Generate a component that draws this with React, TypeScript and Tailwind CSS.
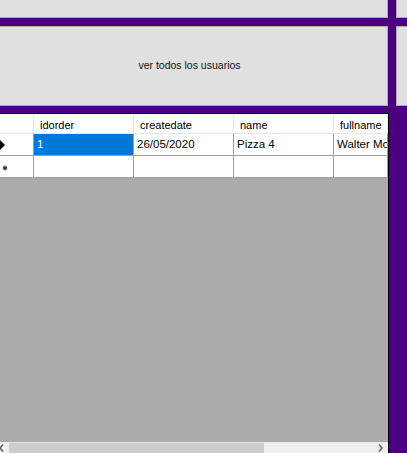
import React from 'react';

const font = { fontFamily: '"Liberation Sans", Arial, sans-serif' };

const cols = [
  { key: 'idorder', w: 'w-[100px]' },
  { key: 'createdate', w: 'w-[100px]' },
  { key: 'name', w: 'w-[100px]' },
  { key: 'fullname', w: 'w-[54px]' },
];

const row = ['1', '26/05/2020', 'Pizza 4', 'Walter Morales'];

const Arrow: React.FC = () => (
  <svg width="6" height="10" viewBox="0 0 6 10" className="block">
    <path d="M0 0 L5 5 L0 10 Z" fill="#000" />
  </svg>
);

const Star: React.FC = () => (
  <svg width="6" height="6" viewBox="0 0 6 6" className="block">
    <path d="M3 0.5 V5.5 M0.8 1.8 L5.2 4.2 M0.8 4.2 L5.2 1.8" stroke="#333" strokeWidth="1.2" />
  </svg>
);

const Chevron: React.FC<{ dir: 'left' | 'right' }> = ({ dir }) => (
  <svg width="5" height="8" viewBox="0 0 5 8" className="block">
    <path d={dir === 'left' ? 'M4 0.5 L1 4 L4 7.5' : 'M1 0.5 L4 4 L1 7.5'} fill="none" stroke="#606060" strokeWidth="1.6" />
  </svg>
);

const App: React.FC = () => {
  return (
    <div className="w-[407px] h-[453px] overflow-hidden bg-[#4b0082] flex flex-col text-[11px] text-black" style={font}>
      {/* top row of buttons */}
      <div className="flex h-[18px] shrink-0">
        <div className="w-[388px] bg-[#e1e1e1] border-r border-b border-[#adadad]" />
        <div className="w-[8px]" />
        <div className="flex-1 bg-[#e1e1e1] border-l border-b border-[#adadad]" />
      </div>
      <div className="h-[8px] shrink-0" />
      <div className="flex h-[80px] shrink-0">
        <button className="w-[388px] bg-[#e1e1e1] border-t border-r border-b border-[#adadad] flex items-center justify-center pr-[8px] text-[10.5px] text-[#111]">
          ver todos los usuarios
        </button>
        <div className="w-[8px]" />
        <div className="flex-1 bg-[#e1e1e1] border-t border-l border-b border-[#adadad]" />
      </div>
      <div className="h-[7px] shrink-0" />

      {/* data grid */}
      <div className="flex flex-1 min-h-0">
        <div className="w-[389px] flex flex-col border-t border-r border-black bg-[#ababab] overflow-hidden">
          {/* header */}
          <div className="flex h-[20px] shrink-0 bg-white border-b border-[#e5e5e5]">
            <div className="w-[34px] shrink-0 border-r border-[#e5e5e5]" />
            {cols.map((c) => (
              <div key={c.key} className={`${c.w} shrink-0 border-r border-[#e5e5e5] pl-[6px] pt-[4px] flex items-center whitespace-nowrap overflow-hidden`}>
                {c.key}
              </div>
            ))}
          </div>
          {/* row 1 */}
          <div className="flex h-[22px] shrink-0 bg-white border-b border-[#a0a0a0]">
            <div className="w-[34px] shrink-0 border-r border-[#a0a0a0] flex items-center">
              <Arrow />
            </div>
            {cols.map((c, i) => (
              <div
                key={c.key}
                className={`${c.w} shrink-0 border-r border-[#a0a0a0] pl-[3px] pt-[1px] flex items-center whitespace-nowrap overflow-hidden text-[11.5px] ${i === 0 ? 'bg-[#0078d7] text-white' : ''}`}
              >
                {row[i]}
              </div>
            ))}
          </div>
          {/* new row */}
          <div className="flex h-[22px] shrink-0 bg-white border-b border-[#a0a0a0]">
            <div className="w-[34px] shrink-0 border-r border-[#a0a0a0] flex items-center pl-[2px] pt-[2px]">
              <Star />
            </div>
            {cols.map((c) => (
              <div key={c.key} className={`${c.w} shrink-0 border-r border-[#a0a0a0]`} />
            ))}
          </div>
          <div className="flex-1" />
          {/* horizontal scrollbar */}
          <div className="h-[11px] shrink-0 bg-[#f0f0f0] border-t border-[#e6e6e6] flex items-stretch">
            <div className="w-[10px] flex items-center -ml-[1px]">
              <Chevron dir="left" />
            </div>
            <div className="w-[255px] bg-[#cdcdcd]" />
            <div className="flex-1" />
            <div className="w-[10px] flex items-center">
              <Chevron dir="right" />
            </div>
          </div>
        </div>
        <div className="flex-1" />
      </div>
    </div>
  );
};

export default App;
